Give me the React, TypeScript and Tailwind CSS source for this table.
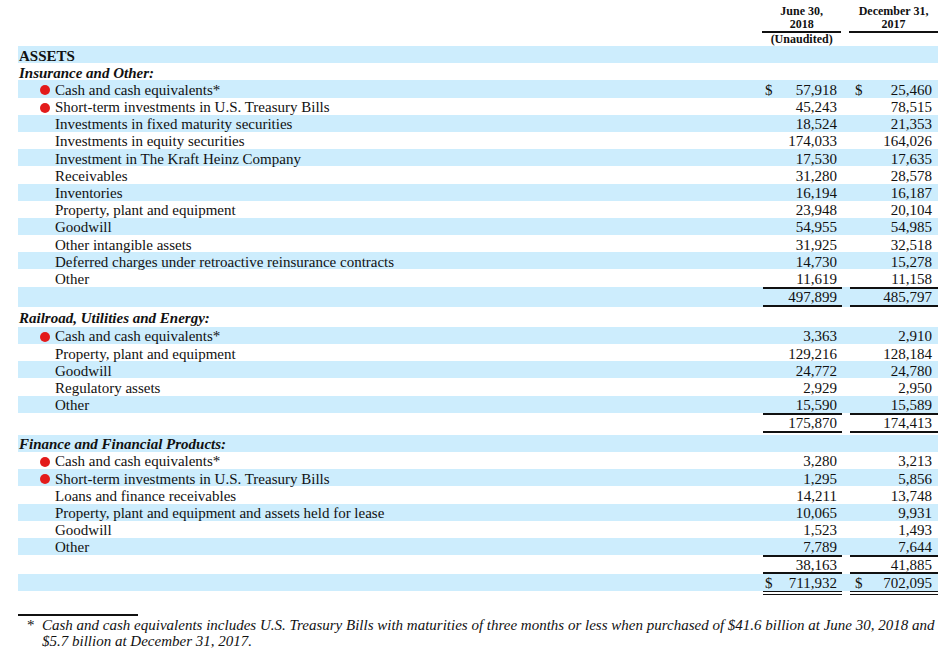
import React from "react";

type Row = {
  kind: "item" | "heading" | "title" | "total" | "railroad";
  label?: string;
  bullet?: boolean;
  a?: string;
  b?: string;
  dollar?: boolean;
  band: boolean;
};

const BAND = "bg-[#cdedfd]";

function Num({ v, dollar, col }: { v?: string; dollar?: boolean; col: 1 | 2 }) {
  return (
    <div
      className={
        col === 1
          ? "flex w-[79px] justify-between pl-[2px] pr-[5px]"
          : "ml-[8px] flex w-[88px] justify-between pl-[5px] pr-[6px]"
      }
    >
      <span>{dollar ? "$" : ""}</span>
      <span>{v ?? ""}</span>
    </div>
  );
}

function Label({ r }: { r: Row }) {
  if (r.kind === "title")
    return <div className="pl-[1px] font-bold">{r.label}</div>;
  if (r.kind === "heading" || r.kind === "railroad")
    return <div className="pl-[1px] font-bold italic">{r.label}</div>;
  if (r.kind === "item")
    return (
      <div className="flex items-center pl-[22px]">
        <span className="flex w-[15px] items-center">
          {r.bullet ? (
            <span className="block h-[10px] w-[10px] rounded-full bg-[#e31b1b]" />
          ) : null}
        </span>
        <span>{r.label}</span>
      </div>
    );
  return <div />;
}

function ItemRow({ r }: { r: Row }) {
  return (
    <div className={`flex h-[17.2px] items-center pt-[3px] ${r.band ? BAND : ""}`}>
      <div className="w-[745px]">
        <Label r={r} />
      </div>
      <Num v={r.a} dollar={r.dollar} col={1} />
      <Num v={r.b} dollar={r.dollar} col={2} />
    </div>
  );
}

function TotalRow({ a, b, band, h }: { a: string; b: string; band: boolean; h: string }) {
  return (
    <div className={`flex ${h} ${band ? BAND : ""}`}>
      <div className="w-[745px]" />
      <div className="flex w-[79px] items-center justify-end border-y-2 border-[#111] pr-[5px] pt-[2px]">
        {a}
      </div>
      <div className="ml-[8px] flex w-[88px] items-center justify-end border-y-2 border-[#111] pr-[6px] pt-[2px]">
        {b}
      </div>
    </div>
  );
}

const ins: Row[] = [
  { kind: "title", label: "ASSETS", band: true },
  { kind: "heading", label: "Insurance and Other:", band: false },
  { kind: "item", label: "Cash and cash equivalents*", bullet: true, a: "57,918", b: "25,460", dollar: true, band: true },
  { kind: "item", label: "Short-term investments in U.S. Treasury Bills", bullet: true, a: "45,243", b: "78,515", band: false },
  { kind: "item", label: "Investments in fixed maturity securities", a: "18,524", b: "21,353", band: true },
  { kind: "item", label: "Investments in equity securities", a: "174,033", b: "164,026", band: false },
  { kind: "item", label: "Investment in The Kraft Heinz Company", a: "17,530", b: "17,635", band: true },
  { kind: "item", label: "Receivables", a: "31,280", b: "28,578", band: false },
  { kind: "item", label: "Inventories", a: "16,194", b: "16,187", band: true },
  { kind: "item", label: "Property, plant and equipment", a: "23,948", b: "20,104", band: false },
  { kind: "item", label: "Goodwill", a: "54,955", b: "54,985", band: true },
  { kind: "item", label: "Other intangible assets", a: "31,925", b: "32,518", band: false },
  { kind: "item", label: "Deferred charges under retroactive reinsurance contracts", a: "14,730", b: "15,278", band: true },
  { kind: "item", label: "Other", a: "11,619", b: "11,158", band: false },
];

const rail: Row[] = [
  { kind: "item", label: "Cash and cash equivalents*", bullet: true, a: "3,363", b: "2,910", band: true },
  { kind: "item", label: "Property, plant and equipment", a: "129,216", b: "128,184", band: false },
  { kind: "item", label: "Goodwill", a: "24,772", b: "24,780", band: true },
  { kind: "item", label: "Regulatory assets", a: "2,929", b: "2,950", band: false },
  { kind: "item", label: "Other", a: "15,590", b: "15,589", band: true },
];

const fin: Row[] = [
  { kind: "heading", label: "Finance and Financial Products:", band: true },
  { kind: "item", label: "Cash and cash equivalents*", bullet: true, a: "3,280", b: "3,213", band: false },
  { kind: "item", label: "Short-term investments in U.S. Treasury Bills", bullet: true, a: "1,295", b: "5,856", band: true },
  { kind: "item", label: "Loans and finance receivables", a: "14,211", b: "13,748", band: false },
  { kind: "item", label: "Property, plant and equipment and assets held for lease", a: "10,065", b: "9,931", band: true },
  { kind: "item", label: "Goodwill", a: "1,523", b: "1,493", band: false },
  { kind: "item", label: "Other", a: "7,789", b: "7,644", band: true },
];

export default function App() {
  return (
    <div className="h-[656px] w-[948px] overflow-hidden bg-white font-['Liberation_Serif',serif] text-[15px] leading-[17.2px] text-[#111]">
      <div className="ml-[18px] w-[920px]">
        {/* header */}
        <div className="flex pt-[5px] text-[12px] font-bold leading-[13px]">
          <div className="w-[745px]" />
          <div className="flex w-[79px] flex-col items-center">
            <div className="w-full border-b-2 border-[#111] text-center">
              <div>June 30,</div>
              <div>2018</div>
            </div>
            <div>(Unaudited)</div>
          </div>
          <div className="ml-[8px] flex w-[89px] flex-col items-center">
            <div className="w-full border-b-2 border-[#111] text-center">
              <div>December 31,</div>
              <div>2017</div>
            </div>
          </div>
        </div>

        {ins.map((r, i) => (
          <ItemRow key={"i" + i} r={r} />
        ))}
        <TotalRow a="497,899" b="485,797" band={true} h="h-[20px]" />

        <div className="flex h-[20.2px] items-end">
          <div className="pl-[1px] font-bold italic">Railroad, Utilities and Energy:</div>
        </div>
        {rail.map((r, i) => (
          <ItemRow key={"r" + i} r={r} />
        ))}
        <TotalRow a="175,870" b="174,413" band={false} h="h-[20px]" />
        <div className="h-[2px]" />

        {fin.map((r, i) => (
          <ItemRow key={"f" + i} r={r} />
        ))}
        <TotalRow a="38,163" b="41,885" band={false} h="h-[18.5px]" />

        <div className={`flex h-[17px] items-center pt-[3px] ${BAND}`}>
          <div className="w-[745px]" />
          <Num v="711,932" dollar col={1} />
          <Num v="702,095" dollar col={2} />
        </div>
        <div className="flex h-[4px]">
          <div className="w-[745px]" />
          <div className="w-[79px] border-b-[4px] border-double border-[#111]" />
          <div className="ml-[8px] w-[88px] border-b-[4px] border-double border-[#111]" />
        </div>

        {/* footnote */}
        <div className="mt-[19px] h-[2px] w-[120px] bg-[#111]" />
      </div>
      <div className="ml-[27px] mt-[1px] flex italic leading-[16.5px]">
        <span className="w-[15px] not-italic">*</span>
        <div className="w-[898px]">
          Cash and cash equivalents includes U.S. Treasury Bills with maturities of three months or less when purchased of $41.6 billion at June 30, 2018 and $5.7 billion at December 31, 2017.
        </div>
      </div>
    </div>
  );
}
